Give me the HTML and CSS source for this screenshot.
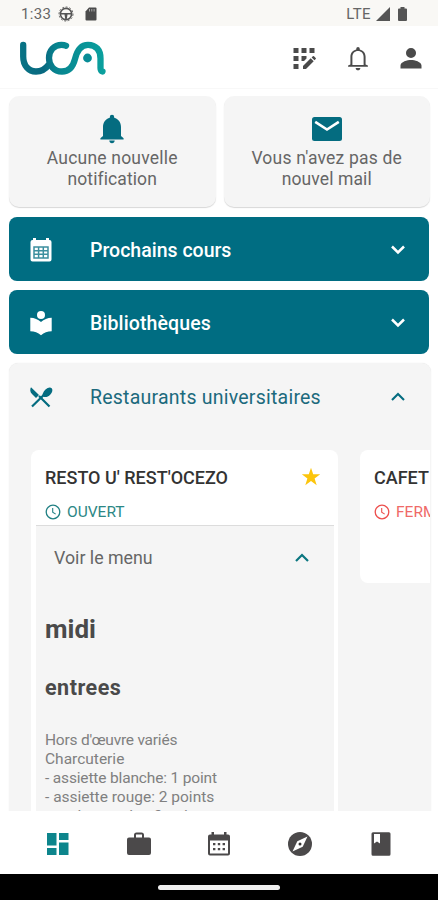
FILE: index.html
```html
<!DOCTYPE html>
<html lang="fr">
<head>
	<meta charset="UTF-8">
	<meta name="viewport" content="width=device-width,initial-scale=1">
	<title>UCA</title>
	<link rel="stylesheet" href="styles.css">
</head>
<body>
	<div class="status">
		<span class="time">1:33</span>
		<svg class="s-wheel" width="16" height="16" viewBox="0 0 16 16"><circle cx="8" cy="8" r="5.6" fill="none" stroke="#555" stroke-width="1.6"/><circle cx="8" cy="8" r="7" fill="none" stroke="#666" stroke-width="1" stroke-dasharray="2 1.6"/><path d="M3 7h10v1.600H9.500L8.800 13H7.200L6.500 8.600H3z" fill="#555"/></svg>
		<svg class="s-card" width="12" height="14" viewBox="0 0 12 14"><path d="M4 0.500h6.500a1 1 0 0 1 1 1v11a1 1 0 0 1-1 1h-9a1 1 0 0 1-1-1V4.500z" fill="#4b4b4b"/><path d="M4.500 2v2.500M6.800 2v2.500M9.100 2v2.500" stroke="#aaa" stroke-width="1"/></svg>
		<span class="lte">LTE</span>
		<svg class="s-signal" width="14" height="14" viewBox="0 0 14 14"><path d="M14 0v14H0z" fill="#555"/></svg>
		<svg class="s-batt" width="9" height="14" viewBox="0 0 9 14"><path d="M2.500 0h4v1.500H8a1 1 0 0 1 1 1V13a1 1 0 0 1-1 1H1a1 1 0 0 1-1-1V2.500a1 1 0 0 1 1-1h1.500z" fill="#555"/></svg>
	</div>
	<header>
		<svg class="logo" width="88" height="36" viewBox="0 0 88 36">
			<defs>
				<linearGradient id="g" gradientUnits="userSpaceOnUse" x1="0" y1="0" x2="88" y2="0">
					<stop offset="0" stop-color="#087485"/>
					<stop offset=".28" stop-color="#086880"/>
					<stop offset=".42" stop-color="#07848f"/>
					<stop offset="1" stop-color="#0ba29f"/>
				</linearGradient>
			</defs>
			<path d="M4.200 5V16.500C4.200 25.500 9.500 31.500 17 31.500C22.500 31.500 26.500 29 29.500 25" fill="none" stroke="url(#g)" stroke-width="6.300" stroke-linecap="round"/>
			<path d="M47 5.800C45.500 5 44 4.800 42.500 4.800C35 4.800 30 10.500 30 18C30 25.500 35 31.500 43 31.500C50 31.500 54 27 56 19C58 10.500 61.500 4.800 69 4.800C77 4.800 81.500 10 81.500 18.500V28Q81.500 31 83.500 31.500" fill="none" stroke="url(#g)" stroke-width="6.300" stroke-linecap="round"/>
			<circle cx="68.500" cy="18" r="4.400" fill="#078c96"/>
		</svg>
		<div class="tools">
			<svg width="24" height="24" viewBox="0 0 24 24"><path d="M1.500 2h5v5h-5zM9.500 2h5v5h-5zM17.500 2h5v5h-5zM1.500 10h5v5h-5zM1.500 18h5v5h-5zM9.500 10h5v2.500L12 15H9.500zM11 23v-3l7.700-7.700 3 3L14 23zM19.600 11.400l1.200-1.200q.6-.5 1.200 0l1.700 1.700q.5.600 0 1.200l-1.200 1.200z" fill="#4a4a4a"/></svg>
			<svg width="28" height="28" viewBox="0 0 24 24"><path d="M10 20.500h4c0 1.100-.9 2-2 2s-2-.9-2-2zM18.500 17.500V11c0-3.200-2-5.600-5-6.300V4a1.500 1.500 0 0 0-3 0v.7c-3 .7-5 3.100-5 6.300v6.500l-2 1V19.500h17v-1zM16.800 18H7.200v-7c0-3 2-5 4.800-5s4.800 2 4.800 5z" fill="#4a4a4a"/></svg>
			<svg width="28" height="28" viewBox="0 0 24 24"><path d="M12 12a4.300 4.300 0 1 0 0-8.600 4.300 4.300 0 0 0 0 8.600zM3 21v-2.600c0-3 6-4.600 9-4.600s9 1.600 9 4.600V21z" fill="#4a4a4a"/></svg>
		</div>
	</header>

	<main>
		<div class="cards">
			<div class="card">
				<svg width="26" height="30" viewBox="0 0 26 30"><path d="M10.300 26.500h5.400c0 1.600-1.200 2.700-2.700 2.700s-2.700-1.100-2.700-2.700zM22 22v-9c0-4.600-2.700-8-6.800-9.200V3a2.200 2.200 0 0 0-4.400 0v.8C6.700 5 4 8.400 4 13v9l-2.600 2.200V25.400h23.200v-1.200z" fill="#046c80"/></svg>
				<p class="c1">Aucune nouvelle</p>
				<p class="c2">notification</p>
			</div>
			<div class="card">
				<svg width="32" height="30" viewBox="0 0 32 30"><rect x="1" y="3" width="30" height="24" rx="2.500" fill="#046c80"/><path d="M4.200 7.800L16 15.500l11.800-7.700" fill="none" stroke="#fff" stroke-width="2.600"/></svg>
				<p class="c1">Vous n'avez pas de</p>
				<p class="c2">nouvel mail</p>
			</div>
		</div>

		<div class="bar">
			<svg class="ico" width="24" height="26" viewBox="0 0 24 26"><path d="M4 3V1h3v2h10V1h3v2h.5a2 2 0 0 1 2 2v17.500a2 2 0 0 1-2 2h-17a2 2 0 0 1-2-2V5a2 2 0 0 1 2-2z" fill="#fff"/><path d="M5 10h14v11H5zM5 13.700h14M5 17.300h14M9.600 10v11M14.300 10v11" fill="none" stroke="#3c8f9e" stroke-width="1.500"/></svg>
			<span>Prochains cours</span>
			<svg class="chev" width="16" height="12" viewBox="0 0 16 12"><path d="M2 2.500l6 6 6-6" fill="none" stroke="#fff" stroke-width="2.500"/></svg>
		</div>
		<div class="bar">
			<svg class="ico" width="24" height="26" viewBox="0 0 24 26"><circle cx="12" cy="5" r="4" fill="#fff"/><path d="M12 12C9 9.200 5.500 8 1.300 7.800v13.500C5.500 21.500 9 22.700 12 25.200c3-2.500 6.500-3.700 10.700-3.900V7.800C18.500 8 15 9.200 12 12z" fill="#fff"/></svg>
			<span class="b2">Bibliothèques</span>
			<svg class="chev" width="16" height="12" viewBox="0 0 16 12"><path d="M2 2.500l6 6 6-6" fill="none" stroke="#fff" stroke-width="2.500"/></svg>
		</div>

		<section class="resto">
			<div class="resto-head">
				<svg class="ico" width="24" height="24" viewBox="0 0 24 24"><path d="M2 2.200l8 7.700-3 3-4-4C1 7 .8 4.200 2 2.200zM14 13.500c-1.500-3 0-6.500 2.500-9 2.300-2.300 5-2.600 6.200-1.300s.9 4-1.300 6.200c-2.500 2.500-5 3.300-7.400 2.100z" fill="#046c80"/><path d="M3 21.500L15 9.800M10 11l10.500 10.500" stroke="#046c80" stroke-width="2.200"/></svg>
				<span class="b3">Restaurants universitaires</span>
				<svg class="chev" width="16" height="12" viewBox="0 0 16 12"><path d="M2 9l6-6 6 6" fill="none" stroke="#046c80" stroke-width="2.100"/></svg>
			</div>
			<div class="slides">
				<article class="place">
					<div class="place-head">
						<h2>RESTO U' REST'OCEZO</h2>
						<svg width="20" height="20" viewBox="0 0 20 20"><path d="M10 .8l2.200 6.500h7l-5.600 4.100 2.100 6.800L10 14.100l-5.700 4.100 2.100-6.800L.8 7.300h7z" fill="#fcc50c"/></svg>
					</div>
					<div class="state open">
						<svg width="16" height="16" viewBox="0 0 16 16"><circle cx="8" cy="8" r="6.800" fill="none" stroke="#228184" stroke-width="1.300"/><path d="M7.700 4v4.300l3 1.800" fill="none" stroke="#228184" stroke-width="1.100"/></svg>
						<span>OUVERT</span>
					</div>
					<div class="menu">
						<div class="menu-head">
							<span>Voir le menu</span>
							<svg width="16" height="12" viewBox="0 0 16 12"><path d="M2 9l6-6 6 6" fill="none" stroke="#0c7780" stroke-width="2.200"/></svg>
						</div>
						<h3>midi</h3>
						<h4>entrees</h4>
						<p class="l1">Hors d'œuvre variés</p>
						<p>Charcuterie</p>
						<p class="l3">- assiette blanche: 1 point</p>
						<p>- assiette rouge: 2 points</p>
						<p>- assiette noire: 3 points</p>
					</div>
				</article>
				<article class="place short">
					<div class="place-head">
						<h2>CAFET</h2>
					</div>
					<div class="state closed">
						<svg width="16" height="16" viewBox="0 0 16 16"><circle cx="8" cy="8" r="6.800" fill="none" stroke="#ed4f4d" stroke-width="1.300"/><path d="M7.700 4v4.300l3 1.800" fill="none" stroke="#ed4f4d" stroke-width="1.100"/></svg>
						<span>FERMÉ</span>
					</div>
				</article>
			</div>
		</section>
	</main>

	<nav>
		<a><svg width="24" height="24" viewBox="0 0 24 24"><path d="M1 1h9.500v12.500H1zM13 1h9.500v7H13zM1 16h9.500v7H1zM13 10.500h9.500V23H13z" fill="#0d858c"/></svg></a>
		<a><svg width="26" height="26" viewBox="0 0 26 26"><path d="M3 6.500h5V4a2.500 2.500 0 0 1 2.500-2.500h5A2.500 2.500 0 0 1 18 4v2.500h5a2 2 0 0 1 2 2v13.500a2 2 0 0 1-2 2H3a2 2 0 0 1-2-2V8.500a2 2 0 0 1 2-2zM10 6.500h6V3.500h-6z" fill="#4b494a" fill-rule="evenodd"/></svg></a>
		<a><svg width="26" height="26" viewBox="0 0 26 26"><path d="M5.500 3.500V1h2.500v2.500h10V1h2.500v2.500H22a2 2 0 0 1 2 2V22.500a2 2 0 0 1-2 2H4a2 2 0 0 1-2-2v-17a2 2 0 0 1 2-2zM4 9.500V22.500h18v-13z" fill="#4b494a" fill-rule="evenodd"/><path d="M7 12h2.400v2.200H7zM11.800 12h2.400v2.200h-2.400zM16.600 12H19v2.200h-2.400zM7 17h2.400v2.200H7zM11.800 17h2.400v2.200h-2.400zM16.600 17H19v2.200h-2.400z" fill="#4b494a"/></svg></a>
		<a><svg width="26" height="26" viewBox="0 0 26 26"><circle cx="13" cy="13" r="12" fill="#4b494a"/><path d="M20.500 5.500l-4.800 10.200L5.500 20.500l4.800-10.200z" fill="#fff"/><circle cx="13" cy="13" r="1.500" fill="#333"/></svg></a>
		<a><svg width="26" height="26" viewBox="0 0 26 26"><path d="M5 1.200h16a1.500 1.500 0 0 1 1.500 1.500v20.600a1.500 1.500 0 0 1-1.500 1.500H5a1.500 1.500 0 0 1-1.500-1.500V2.700A1.500 1.500 0 0 1 5 1.200zM6 3v9.500l3-2 3 2V3z" fill="#4b494a" fill-rule="evenodd"/></svg></a>
	</nav>
	<div class="home"><span></span></div>
</body>
</html>
```
FILE: styles.css
```css
*{
	box-sizing: border-box;
}
body{
	margin: 0;
	width: 438px;
	height: 900px;
	overflow: hidden;
	display: flex;
	flex-direction: column;
	background: #fff;
	font-family: Roboto, "Liberation Sans", sans-serif;
	color: #4a4a4a;
}
svg{
	display: block;
	flex: none;
}
p,h2,h3,h4{
	margin: 0;
	white-space: nowrap;
}
.status{
	height: 26px;
	flex: none;
	background: #f9f8f5;
	display: flex;
	align-items: center;
	padding: 2px 31px 0 21px;
	font-size: 15px;
	color: #666;
}
.time{
	width: 37px;
	letter-spacing: .3px;
}
.s-card{
	margin-left: 11px;
}
.lte{
	margin-left: auto;
	letter-spacing: .4px;
}
.s-signal{
	margin-left: 5px;
}
.s-batt{
	margin-left: 8px;
}
header{
	height: 62px;
	flex: none;
	display: flex;
	justify-content: space-between;
	padding: 14px 13px 0 19px;
}
.tools{
	display: flex;
	align-items: center;
	height: 36px;
	gap: 25px;
}
.tools svg:first-child{
	margin-right: 3px;
}
main{
	height: 723px;
	flex: none;
	overflow: hidden;
	padding: 7px 7px 0 9px;
	border-top: 1px solid #f8f8f8;
}
.cards{
	display: flex;
	gap: 8px;
	padding-right: 1px;
}
.card{
	flex: 1;
	height: 111px;
	border-radius: 10px;
	background: #f5f5f5;
	box-shadow: 0 1px 1px #d8d8d8;
	display: flex;
	flex-direction: column;
	align-items: center;
	padding-top: 18px;
	font-size: 17.500px;
	line-height: 21px;
	color: #666;
}
.card svg{
	margin-bottom: 4px;
}
.c1{
	letter-spacing: .2px;
}
.c2{
	letter-spacing: .1px;
}
.bar{
	height: 64px;
	width: 420px;
	margin-top: 9px;
	border-radius: 8px;
	background: #006d82;
	color: #fff;
	font-size: 19.500px;
	font-weight: 500;
	display: flex;
	align-items: center;
	padding: 2px 23px 0 20px;
}
.cards + .bar{
	margin-top: 10px;
}
.b2{
	letter-spacing: .12px;
}
.b3{
	letter-spacing: .23px;
}
.ico{
	margin-right: 37px;
}
.chev{
	margin-left: auto;
}
.resto{
	margin-top: 9px;
	width: 422px;
	height: 460px;
	border-radius: 9px 9px 0 0;
	background: #f5f5f5;
	box-shadow: 0 0 1px #ddd;
	overflow: hidden;
}
.resto-head{
	height: 66px;
	display: flex;
	align-items: center;
	padding: 2px 25px 0 20px;
	font-size: 19.500px;
	color: #1c6a7d;
}
.slides{
	width: 421px;
	overflow: hidden;
	display: flex;
	align-items: flex-start;
	gap: 22px;
	padding: 21px 0 0 22px;
}
.place{
	flex: none;
	width: 307px;
	height: 500px;
	border-radius: 8px;
	background: #fff;
}
.short{
	height: 133px;
}
.place-head{
	height: 51px;
	display: flex;
	align-items: center;
	justify-content: space-between;
	padding: 4px 17px 0 14px;
}
.place h2{
	font-size: 18px;
	font-weight: 500;
	color: #333;
}
.place-head svg{
	margin-top: -2px;
}
.state{
	height: 22px;
	margin-bottom: 2px;
	display: flex;
	align-items: center;
	gap: 6px;
	padding-left: 14px;
	font-size: 15.500px;
}
.open{
	color: #2c8785;
}
.closed{
	color: #ef6a68;
}
.menu{
	margin: 0 4px 0 5px;
	border-top: 1px solid #dcdcdc;
	background: #f5f5f5;
	height: 425px;
	padding-left: 9px;
}
.menu-head{
	height: 63px;
	display: flex;
	align-items: center;
	justify-content: space-between;
	padding: 0 24px 0 9px;
	font-size: 17.800px;
	color: #666;
}
.menu h3{
	margin-top: 24px;
	font-size: 26px;
	line-height: 32px;
}
.menu h4{
	margin: 30px 0 30px;
	font-size: 21.500px;
	line-height: 26px;
	letter-spacing: .5px;
}
.menu p{
	font-size: 15.500px;
	line-height: 19px;
	color: #808080;
}
.menu .l1{
	letter-spacing: -.22px;
}
.menu .l3{
	letter-spacing: -.16px;
}
nav{
	height: 63px;
	flex: none;
	display: flex;
	align-items: center;
	justify-content: space-around;
	padding: 2px 17px 0 18px;
}
nav a{
	width: 80px;
	display: flex;
	justify-content: center;
}
.home{
	height: 26px;
	flex: none;
	background: #000;
	display: flex;
	align-items: center;
	justify-content: center;
}
.home span{
	width: 122px;
	height: 5px;
	border-radius: 3px;
	background: #eee;
}
```
